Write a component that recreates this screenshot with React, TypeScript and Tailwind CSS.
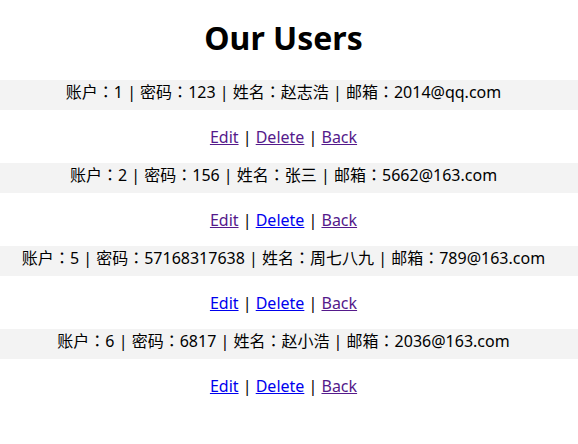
const USERS = [
  { id: 1, pwd: '123', name: '赵志浩', email: '2014@qq.com', visited: [true, true, true] },
  { id: 2, pwd: '156', name: '张三', email: '5662@163.com', visited: [true, false, true] },
  { id: 5, pwd: '57168317638', name: '周七八九', email: '789@163.com', visited: [false, false, true] },
  { id: 6, pwd: '6817', name: '赵小浩', email: '2036@163.com', visited: [false, false, true] },
];

const LINKS = ['Edit', 'Delete', 'Back'];

const Colon = () => <span className="font-['Noto_Sans_CJK_TC',sans-serif]">：</span>;

export default function App() {
  return (
    <div
      className="w-[578px] h-[444px] bg-white text-black"
      style={{ fontFamily: '"Noto Sans", "Noto Sans CJK SC", sans-serif' }}
    >
      <h1 className="pt-[17px] pr-[11px] h-[80px] text-center text-[32px] font-bold leading-[42px]">Our Users</h1>
      {USERS.map((u) => (
        <div key={u.id} className="h-[83px]">
          <div className="h-[30px] pr-[11px] bg-[#f3f3f3] text-center text-[16px] leading-[22px]">
            账户<Colon />{u.id} | 密码<Colon />{u.pwd} | 姓名<Colon />{u.name} | 邮箱<Colon />{u.email}
          </div>
          <p className="mt-[16px] pr-[11px] text-center text-[16px] leading-[22px]">
            {LINKS.map((l, i) => (
              <span key={l}>
                {i > 0 && ' | '}
                <a
                  href="#"
                  className={`underline ${u.visited[i] ? 'text-[#551a8b]' : 'text-[#0000ee]'}`}
                >
                  {l}
                </a>
              </span>
            ))}
          </p>
        </div>
      ))}
    </div>
  );
}
